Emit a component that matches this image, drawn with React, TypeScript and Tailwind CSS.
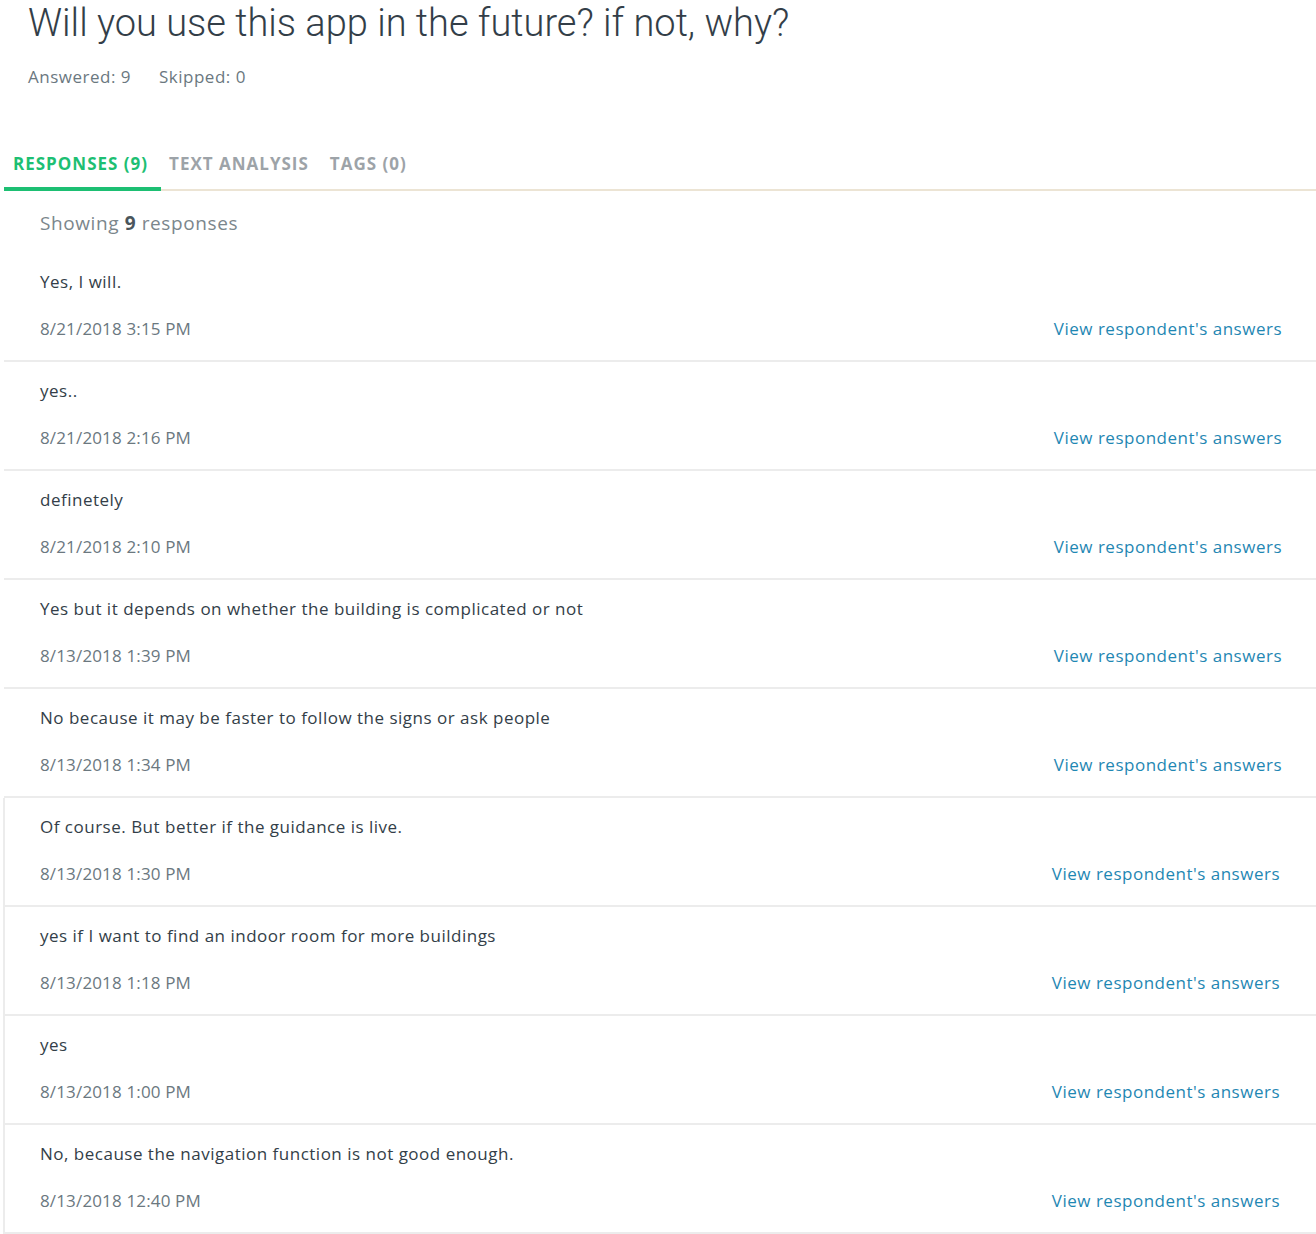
import React from "react";

type Response = { text: string; date: string };

const responses: Response[] = [
  { text: "Yes, I will.", date: "8/21/2018 3:15 PM" },
  { text: "yes..", date: "8/21/2018 2:16 PM" },
  { text: "definetely", date: "8/21/2018 2:10 PM" },
  { text: "Yes but it depends on whether the building is complicated or not", date: "8/13/2018 1:39 PM" },
  { text: "No because it may be faster to follow the signs or ask people", date: "8/13/2018 1:34 PM" },
  { text: "Of course. But better if the guidance is live.", date: "8/13/2018 1:30 PM" },
  { text: "yes if I want to find an indoor room for more buildings", date: "8/13/2018 1:18 PM" },
  { text: "yes", date: "8/13/2018 1:00 PM" },
  { text: "No, because the navigation function is not good enough.", date: "8/13/2018 12:40 PM" },
];

// rows further down carry a left rule and sit 2px tighter on the right
const ResponseRow = ({ r, framed }: { r: Response; framed: boolean }) => (
  <div
    className={
      "h-[109px] border-b-2 border-[#ececec] flex flex-col " +
      (framed ? "border-l-2 -ml-px pl-[35px] pr-[36px]" : "pl-9 pr-[34px]")
    }
  >
    <div className="pt-[18px] text-[17px] leading-[22px] tracking-[0.5px] text-[#333e48]">{r.text}</div>
    <div className="mt-[25px] flex items-center justify-between text-[17px] leading-[22px]">
      <span className="text-[#6b787f] tracking-[0.15px]">{r.date}</span>
      <a href="#" className="text-[#1f87b3] tracking-[0.5px]">
        View respondent's answers
      </a>
    </div>
  </div>
);

export default function App() {
  return (
    <div className="w-[1316px] bg-white font-['Open_Sans',sans-serif]">
      <div className="pl-7">
        <h1 className="pt-[1px] text-[38px] leading-[44px] font-light text-[#333e48] font-['Roboto',sans-serif]">
          Will you use this app in the future? if not, why?
        </h1>
        <div className="mt-[21px] flex gap-7 text-[17px] leading-[22px] tracking-[0.5px] text-[#6b787f]">
          <span>Answered: 9</span>
          <span>Skipped: 0</span>
        </div>
      </div>

      <div className="mt-[64px] ml-1 flex border-b-2 border-[#ece4d4] text-[17px] font-bold leading-[24px] tracking-[1px]">
        <div className="pl-[9px] pr-[13px] pb-[11px] border-b-4 border-[#1dbf73] -mb-[2px] text-[#1dbf73]">
          RESPONSES (9)
        </div>
        <div className="pl-[8px] pr-[13px] pb-[11px] text-[#9da3a8]">TEXT ANALYSIS</div>
        <div className="pl-[8px] pb-[11px] text-[#9da3a8]">TAGS (0)</div>
      </div>

      <div className="ml-1">
        <div className="pl-9 pt-[20px] h-[62px] text-[19px] leading-[24px] tracking-[0.6px] text-[#7b868c]">
          Showing <span className="font-bold text-[#4a555c]">9</span> responses
        </div>
        {responses.map((r, i) => (
          <ResponseRow key={i} r={r} framed={i >= 5} />
        ))}
      </div>
    </div>
  );
}
